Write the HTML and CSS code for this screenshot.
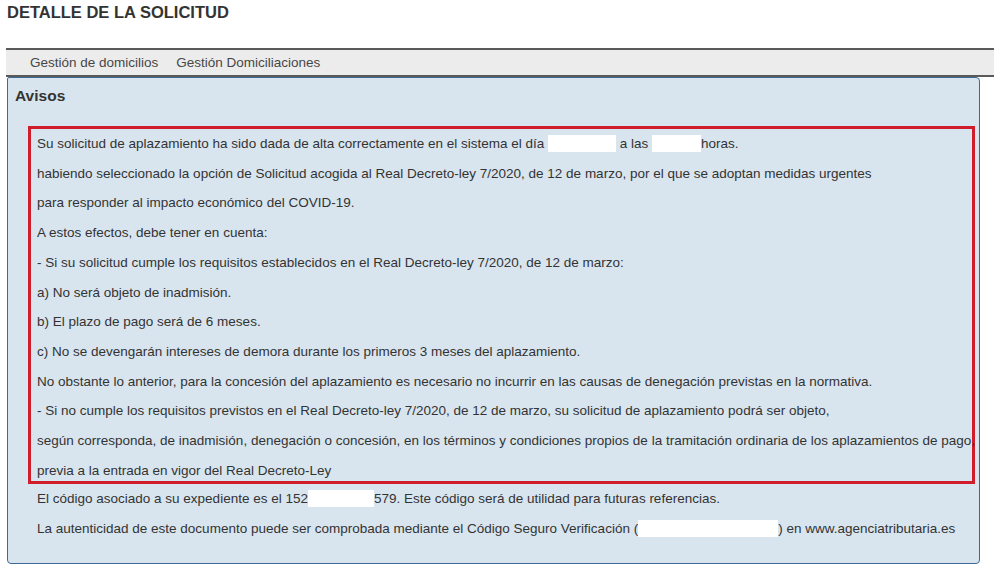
FILE: index.html
```html
<!DOCTYPE html>
<html lang="es">
<head>
<meta charset="utf-8">
<title>Detalle de la solicitud</title>
<link rel="stylesheet" href="styles.css">
</head>
<body>
<h1 class="page-title">DETALLE DE LA SOLICITUD</h1>
<nav class="tabs">
  <span class="tab">Gestión de domicilios</span>
  <span class="tab">Gestión Domiciliaciones</span>
</nav>
<section class="panel">
  <h2 class="panel-title">Avisos</h2>
  <div class="alert-box">
    <p class="line">Su solicitud de aplazamiento ha sido dada de alta correctamente en el sistema el día <span class="redact r-date"></span> a las <span class="redact r-time"></span>horas.</p>
    <p class="line">habiendo seleccionado la opción de Solicitud acogida al Real Decreto-ley 7/2020, de 12 de marzo, por el que se adoptan medidas urgentes</p>
    <p class="line">para responder al impacto económico del COVID-19.</p>
    <p class="line">A estos efectos, debe tener en cuenta:</p>
    <p class="line">- Si su solicitud cumple los requisitos establecidos en el Real Decreto-ley 7/2020, de 12 de marzo:</p>
    <p class="line">a) No será objeto de inadmisión.</p>
    <p class="line">b) El plazo de pago será de 6 meses.</p>
    <p class="line">c) No se devengarán intereses de demora durante los primeros 3 meses del aplazamiento.</p>
    <p class="line">No obstante lo anterior, para la concesión del aplazamiento es necesario no incurrir en las causas de denegación previstas en la normativa.</p>
    <p class="line">- Si no cumple los requisitos previstos en el Real Decreto-ley 7/2020, de 12 de marzo, su solicitud de aplazamiento podrá ser objeto,</p>
    <p class="line">según corresponda, de inadmisión, denegación o concesión, en los términos y condiciones propios de la tramitación ordinaria de los aplazamientos de pago,</p>
    <p class="line">previa a la entrada en vigor del Real Decreto-Ley</p>
  </div>
  <p class="line note">El código asociado a su expediente es el 152<span class="redact r-code"></span>579. Este código será de utilidad para futuras referencias.</p>
  <p class="line note">La autenticidad de este documento puede ser comprobada mediante el Código Seguro Verificación (<span class="redact r-csv"></span>) en www.agenciatributaria.es</p>
</section>
</body>
</html>
```

FILE: styles.css
```css
* { box-sizing: border-box; }

body {
  margin: 0;
  background: #ffffff;
  font-family: "Liberation Sans", Arial, sans-serif;
  color: #333333;
}

.page-title {
  margin: 0;
  padding: 4px 7px 0 7px;
  font-size: 16.5px;
  line-height: 16px;
  font-weight: bold;
  color: #333333;
}

.tabs {
  margin: 28px 6px 0 6px;
  height: 29px;
  border-top: 2px solid #5a5a5a;
  border-bottom: 2px solid #5a5a5a;
  background: #ececec;
  display: flex;
  gap: 18px;
  padding-left: 24px;
  font-size: 13.5px;
  line-height: 25px;
  color: #474747;
}

.panel {
  margin: 0 20px 0 7px;
  border: 1px solid #3e6b95;
  border-radius: 2px 4px 4px 4px;
  background: #d8e5ef;
  padding: 0 0 20px 0;
}

.panel-title {
  margin: 0;
  padding: 8px 0 0 7px;
  font-size: 15.5px;
  line-height: 20px;
  font-weight: bold;
  color: #333333;
}

.alert-box {
  margin: 20px 4px 0 20px;
  height: 358px;
  border: 3px solid #cf1d2c;
  padding: 0 0 0 6px;
  white-space: nowrap;
}

.line {
  margin: 0;
  font-size: 13.5px;
  line-height: 29.7px;
  white-space: nowrap;
}

.note {
  padding-left: 29px;
}

.redact {
  display: inline-block;
  height: 17px;
  background: #ffffff;
  vertical-align: -4px;
}

.r-date { width: 68px; }
.r-time { width: 49px; }
.r-code { width: 66px; }
.r-csv { width: 140px; }
```
